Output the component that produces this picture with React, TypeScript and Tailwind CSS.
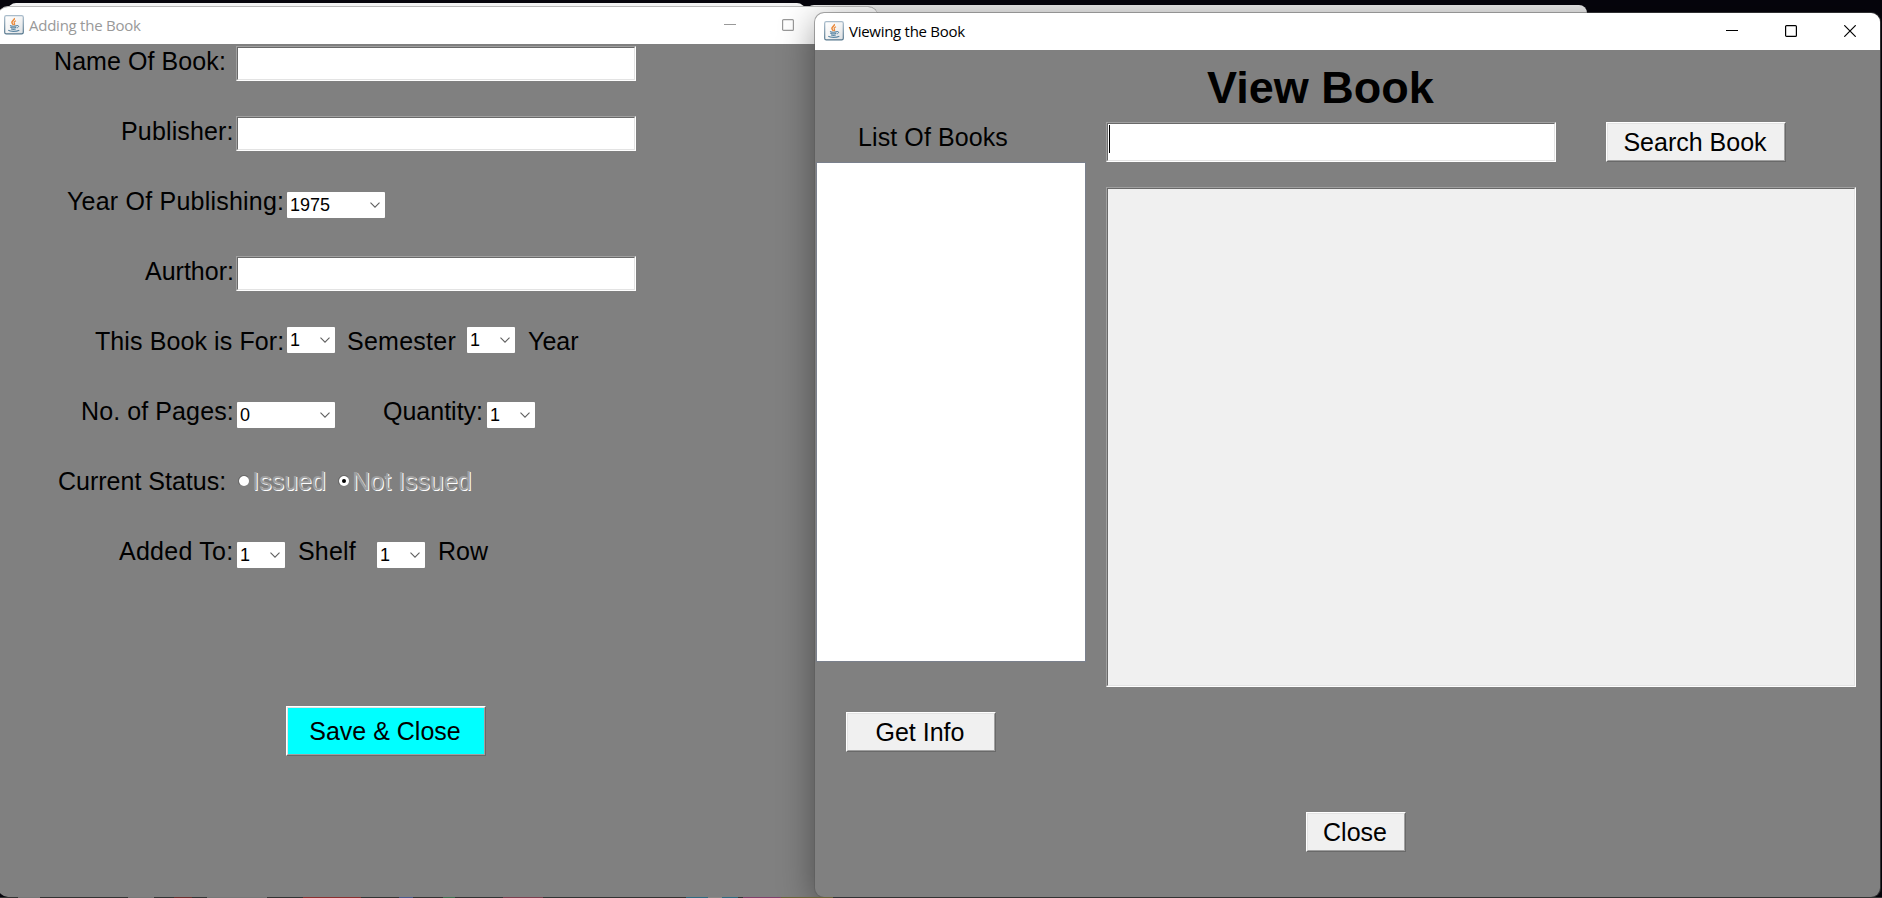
import React from "react";

const sans = "font-['Liberation_Sans',Arial,sans-serif]";

function JavaIcon() {
  return (
    <svg width="20" height="20" viewBox="0 0 20 20" className="block shrink-0">
      <defs>
        <linearGradient id="tile" x1="0" y1="0" x2="1" y2="1">
          <stop offset="0" stopColor="#ffffff" />
          <stop offset="0.5" stopColor="#f4f4f4" />
          <stop offset="1" stopColor="#dcdfe2" />
        </linearGradient>
        <linearGradient id="edge" x1="0" y1="0" x2="0" y2="1">
          <stop offset="0" stopColor="#a9bccb" />
          <stop offset="1" stopColor="#53758c" />
        </linearGradient>
      </defs>
      <rect x="0.7" y="0.7" width="18.6" height="18.2" rx="1.6" fill="url(#tile)" stroke="url(#edge)" strokeWidth="1.2" />
      <path d="M10.3 3.2c.9 1.5-2.6 2.6-2.4 4.3.1 1 1.3 1.8 1.7 2.6" fill="none" stroke="#ea8a3c" strokeWidth="1.5" />
      <path d="M12 5.8c-1.8.8-2.3 1.5-1.5 2.7.4.7.2 1.2-.3 1.7" fill="none" stroke="#ea8a3c" strokeWidth="1.2" />
      <path d="M6 10.5c1.5.8 5 .8 7 0M6.3 12.3c1.8.7 4.3.7 6 0M7 14c1.5.5 3.5.5 4.8 0" fill="none" stroke="#5b86a3" strokeWidth="1.1" />
      <path d="M13 10.6c2.2-.6 2.2 1.8-.2 2.3" fill="none" stroke="#5b86a3" strokeWidth="1" />
      <path d="M4.3 15.3c2 1.4 8 1.4 11-.1" fill="none" stroke="#5b86a3" strokeWidth="1.2" />
    </svg>
  );
}

function Minimize() {
  return (
    <svg width="12" height="12" viewBox="0 0 12 12" className="block">
      <path d="M0 5.5h12" stroke="currentColor" />
    </svg>
  );
}

function Maximize() {
  return (
    <svg width="12" height="12" viewBox="0 0 12 12" className="block">
      <rect x="0.6" y="0.6" width="10.8" height="10.8" rx="1" fill="none" stroke="currentColor" strokeWidth="1.2" />
    </svg>
  );
}

function CloseGlyph() {
  return (
    <svg width="12" height="12" viewBox="0 0 12 12" className="block">
      <path d="M0.3.3l11.4 11.4M11.7.3L.3 11.7" stroke="currentColor" strokeWidth="1.2" />
    </svg>
  );
}

function Label({ className, children }: { className: string; children: React.ReactNode }) {
  return <span className={`block shrink-0 whitespace-nowrap text-[25px] leading-[30px] ${className}`}>{children}</span>;
}

function Sunken({ className, children }: { className: string; children?: React.ReactNode }) {
  return (
    <div className={`shrink-0 border border-b-white border-l-[#a0a0a0] border-r-white border-t-[#a0a0a0] ${className}`}>
      <div className="h-full w-full border border-b-[#e3e3e3] border-l-[#696969] border-r-[#e3e3e3] border-t-[#696969]">{children}</div>
    </div>
  );
}

function Button({ className, face, children }: { className: string; face: string; children: React.ReactNode }) {
  return (
    <button className={`block shrink-0 border border-b-[#696969] border-l-white border-r-[#696969] border-t-white text-[25px] leading-[30px] ${className}`}>
      <span className={`flex h-full w-full items-center justify-center border border-b-[#a0a0a0] border-l-[#e3e3e3] border-r-[#a0a0a0] border-t-[#e3e3e3] pr-[2px] ${face}`}>
        {children}
      </span>
    </button>
  );
}

function Choice({ className, value }: { className: string; value: string }) {
  return (
    <div className={`flex h-[26px] shrink-0 items-center justify-between rounded-[1px] bg-white pl-[3px] pr-[5px] text-[18px] leading-[26px] ${className}`}>
      <span>{value}</span>
      <svg width="10" height="6" viewBox="0 0 10 6" className="block">
        <path d="M0.5.6L5 5.1L9.5.6" fill="none" stroke="#606060" strokeWidth="1.1" />
      </svg>
    </div>
  );
}

function Radio({ checked }: { checked: boolean }) {
  return (
    <svg width="12" height="12" viewBox="0 0 12 12" className="mt-[11px] block shrink-0">
      <circle cx="6" cy="6" r="5" fill="#fff" />
      <path d="M2 10A5.5 5.5 0 0 1 10 2" fill="none" stroke="#696969" />
      {checked && <circle cx="6" cy="6" r="2" fill="#000" />}
    </svg>
  );
}

const disabled = "text-[#a0a0a0] [text-shadow:1px_1px_0_#ffffff]";

function AddingWindow() {
  return (
    <section className="absolute left-[-2px] top-[6px] flex h-[891px] w-[880px] flex-col overflow-hidden rounded-[10px] border-t border-[#b9b9b9] bg-[#808080] pl-[2px]">
      <header className="-ml-[2px] flex h-[37px] shrink-0 items-center bg-white pb-[2px] pl-[6px] text-[#999999]">
        <JavaIcon />
        <h2 className="ml-[5px] w-[695px] font-['Open_Sans',sans-serif] text-[15px] leading-[20px] tracking-[-0.25px]">Adding the Book</h2>
        <Minimize />
        <span className="ml-[46px]">
          <Maximize />
        </span>
      </header>
      <div className="flex flex-col">
        <div className="flex h-[70px] items-start">
          <Label className="ml-[54px] mt-[2px] w-[182px] tracking-[0.08px]">Name Of Book:</Label>
          <Sunken className="mt-[2px] h-[35px] w-[400px] bg-white" />
        </div>
        <div className="flex h-[70px] items-start">
          <Label className="ml-[121px] mt-[2px] w-[115px] tracking-[0.15px]">Publisher:</Label>
          <Sunken className="mt-[2px] h-[35px] w-[400px] bg-white" />
        </div>
        <div className="flex h-[70px] items-start">
          <Label className="ml-[67px] mt-[2px] w-[220px] tracking-[0.22px]">Year Of Publishing:</Label>
          <Choice className="mt-[8px] w-[98px]" value="1975" />
        </div>
        <div className="flex h-[70px] items-start">
          <Label className="ml-[145px] mt-[2px] w-[91px]">Aurthor:</Label>
          <Sunken className="mt-[2px] h-[35px] w-[400px] bg-white" />
        </div>
        <div className="flex h-[70px] items-start">
          <Label className="ml-[95px] mt-[2px] w-[192px] tracking-[0.1px]">This Book is For:</Label>
          <Choice className="mt-[3px] w-[48px]" value="1" />
          <Label className="ml-[12px] mt-[2px] w-[120px] tracking-[0.25px]">Semester</Label>
          <Choice className="mt-[3px] w-[48px]" value="1" />
          <Label className="ml-[13px] mt-[2px]">Year</Label>
        </div>
        <div className="flex h-[70px] items-start">
          <Label className="ml-[81px] mt-[2px] w-[156px] tracking-[0.1px]">No. of Pages:</Label>
          <Choice className="mt-[8px] w-[98px]" value="0" />
          <Label className="ml-[48px] mt-[2px] w-[104px]">Quantity:</Label>
          <Choice className="mt-[8px] w-[48px]" value="1" />
        </div>
        <div className="flex h-[70px] items-start">
          <Label className="ml-[58px] mt-[2px] w-[180px]">Current Status:</Label>
          <Radio checked={false} />
          <Label className={`ml-[2px] mt-[2px] w-[86px] ${disabled}`}>Issued</Label>
          <Radio checked />
          <Label className={`ml-[2px] mt-[2px] ${disabled}`}>Not Issued</Label>
        </div>
        <div className="flex h-[70px] items-start">
          <Label className="ml-[119px] mt-[2px] w-[118px] tracking-[0.25px]">Added To:</Label>
          <Choice className="mt-[8px] w-[48px]" value="1" />
          <Label className="ml-[13px] mt-[2px] w-[79px] tracking-[0.2px]">Shelf</Label>
          <Choice className="mt-[8px] w-[48px]" value="1" />
          <Label className="ml-[13px] mt-[2px]">Row</Label>
        </div>
      </div>
      <Button className="ml-[286px] mt-[102px] h-[50px] w-[200px]" face="bg-[#00ffff]">
        Save &amp; Close
      </Button>
    </section>
  );
}

function ViewingWindow() {
  return (
    <section className="absolute left-[815px] top-[13px] flex h-[884px] w-[1065px] flex-col rounded-[9px] bg-[#808080] shadow-[0_0_0_1px_rgba(90,90,90,0.5),0_8px_36px_rgba(0,0,0,0.42)]">
      <header className="flex h-[37px] shrink-0 items-center rounded-t-[9px] bg-white pb-px pl-[9px] pr-[24px] text-black">
        <JavaIcon />
        <h2 className="ml-[5px] font-['Open_Sans',sans-serif] text-[15px] leading-[20px] tracking-[-0.28px]">Viewing the Book</h2>
        <div className="ml-auto flex items-center gap-[47px]">
          <Minimize />
          <Maximize />
          <CloseGlyph />
        </div>
      </header>
      <h1 className="ml-[392px] mt-[13px] h-[59px] whitespace-nowrap text-[45px] font-bold leading-[50px]">View Book</h1>
      <div className="flex">
        <div className="flex w-[291px] shrink-0 flex-col">
          <Label className="ml-[43px] h-[38px] tracking-[0.1px]">List Of Books</Label>
          <div className="ml-[1px] mt-[2px] h-[500px] w-[270px] border border-[#7a808c] bg-white" />
          <Button className="ml-[31px] mt-[50px] h-[40px] w-[150px]" face="bg-[#f0f0f0]">
            Get Info
          </Button>
        </div>
        <div className="flex flex-col">
          <div className="flex">
            <Sunken className="h-[40px] w-[450px] bg-white">
              <div className="ml-[1px] mt-[1px] h-[28px] w-px bg-black" />
            </Sunken>
            <Button className="ml-[50px] h-[40px] w-[180px]" face="bg-[#f0f0f0]">
              Search Book
            </Button>
          </div>
          <Sunken className="mt-[25px] h-[500px] w-[750px] bg-[#f0f0f0]" />
          <Button className="ml-[200px] mt-[125px] h-[40px] w-[100px]" face="bg-[#f0f0f0]">
            Close
          </Button>
        </div>
      </div>
    </section>
  );
}

export default function App() {
  return (
    <main className={`relative h-[898px] w-[1882px] overflow-hidden bg-[#06050c] text-black ${sans}`}>
      <div className="absolute left-[8px] top-[3px] h-[40px] w-[797px] rounded-[8px] bg-[#f3f3f3]" />
      <div className="absolute left-[806px] top-[5px] h-[40px] w-[781px] rounded-[8px] bg-[#ececec]" />
      <AddingWindow />
      <ViewingWindow />
      <div className="absolute bottom-0 left-0 flex h-px w-full bg-[#333333]">
        <i className="ml-[18px] w-[22px] bg-[#777777]" />
        <i className="ml-[88px] w-[26px] bg-[#777777]" />
        <i className="ml-[20px] w-[18px] bg-[#6b2e2e]" />
        <i className="ml-[15px] w-[60px] bg-[#777777]" />
        <i className="ml-[36px] w-[58px] bg-[#8a3030]" />
        <i className="ml-[38px] w-[14px] bg-[#4a5a8a]" />
        <i className="ml-[30px] w-[12px] bg-[#3f7050]" />
        <i className="ml-[48px] w-[40px] bg-[#7a4050]" />
        <i className="ml-[143px] w-[22px] bg-[#2f6a80]" />
        <i className="w-[14px] bg-[#888888]" />
        <i className="w-[16px] bg-[#2f6a80]" />
        <i className="ml-[5px] w-[38px] bg-[#80406a]" />
        <i className="w-[52px] bg-[#6a6238]" />
      </div>
    </main>
  );
}
